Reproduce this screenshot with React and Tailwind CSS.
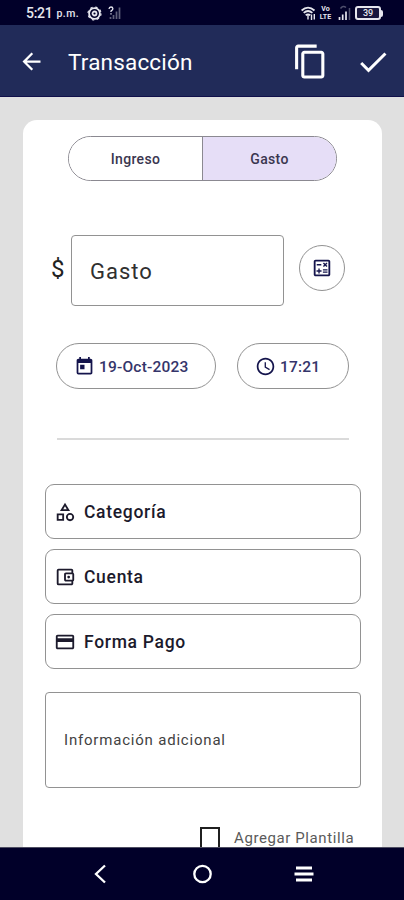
import React, { useState } from "react";
import {
  MdArrowBack,
  MdCheck,
  MdContentCopy,
  MdToday,
  MdSchedule,
  MdOutlineCalculate,
  MdOutlineCategory,
  MdOutlineAccountBalanceWallet,
  MdOutlineCreditCard,
} from "react-icons/md";

const options = [
  { label: "Categoría", icon: MdOutlineCategory },
  { label: "Cuenta", icon: MdOutlineAccountBalanceWallet },
  { label: "Forma Pago", icon: MdOutlineCreditCard },
];

function StatusBar() {
  return (
    <div className="flex h-[25px] shrink-0 items-center bg-[#010029] pl-[26px] pr-[21px] pt-px text-[#e6e6ee]">
      <span className="text-[14px] font-medium leading-none tracking-[-0.3px]">5:21</span>
      <span className="ml-[4px] pt-[3px] text-[10.5px] font-medium leading-none tracking-[0.5px]">p.m.</span>
      <svg className="ml-[8px] h-[15px] w-[15px]" viewBox="0 0 15 15" fill="none" stroke="currentColor">
        <circle cx="7.5" cy="7.5" r="5.4" strokeWidth="1.8" />
        <circle cx="7.5" cy="7.5" r="6.5" strokeWidth="1.2" strokeDasharray="2.4 2.7" />
        <circle cx="7.5" cy="7.5" r="2" strokeWidth="1.8" />
      </svg>
      <svg className="ml-[6px] h-[14px] w-[13px]" viewBox="0 0 13 14" fill="none" stroke="currentColor">
        <path d="M1 3q.2-2 2-2t1.9 1.7Q4.9 3.8 3 5v1M3 7.3v1.2" strokeWidth="1.3" />
        <path d="M2.5 13v-2M5.5 13V9M8.5 13V5.5M11.5 13V1.5" strokeWidth="1.7" opacity=".42" />
      </svg>
      <div className="flex-1" />
      <svg className="h-[15px] w-[15px]" viewBox="0 0 15 15" fill="none" stroke="currentColor">
        <path d="M.6 4.5Q7 -1.2 13.5 4.5M2.7 6.9Q7 3.2 11.4 6.9M4.7 9.2Q7 7.5 9.3 9.2" strokeWidth="1.8" />
        <path d="M7 9v4.5M10.5 14V8.5M13.3 8v5.5" strokeWidth="1.4" />
      </svg>
      <div className="ml-[2px] mr-px flex w-[15px] flex-col items-center text-[7px] font-bold">
        <span className="h-[8px] leading-[8px]">Vo</span>
        <span className="h-[8px] leading-[8px]">LTE</span>
      </div>
      <svg className="ml-[4px] h-[16px] w-[13px]" viewBox="0 0 13 16" fill="none" stroke="currentColor">
        <path d="M1.5 15v-3M4.7 15V9.5M8 15V6.5" strokeWidth="1.7" />
        <path d="M11.5 15V3M2.5 3.5Q5 0 8 2.5" strokeWidth="1.5" opacity=".35" />
      </svg>
      <div className="ml-[4px] flex h-[14px] w-[26px] items-center justify-center rounded-[3px] border-2 border-current bg-[#18163e] text-[9px] font-medium leading-none">
        39
      </div>
      <div className="h-[7px] w-[2px] rounded-r-sm bg-current" />
    </div>
  );
}

function AppBar() {
  return (
    <header className="flex h-[72px] shrink-0 items-center border-b border-[#10104a] bg-[#212b59] pl-[18px] pr-[13px] pt-[2px] text-white">
      <MdArrowBack className="h-[27px] w-[27px]" />
      <h1 className="ml-[23px] flex-1 pt-[2px] text-[22.5px] leading-none tracking-[0.18px]">Transacción</h1>
      <MdContentCopy className="mr-[26px] h-[37px] w-[37px]" />
      <MdCheck className="h-[36px] w-[36px]" />
    </header>
  );
}

function NavBar() {
  return (
    <nav className="flex h-[53px] shrink-0 items-center border-t border-[#4e4e62] bg-[#010029] pl-[92px] text-white">
      <svg className="h-[20px] w-[16px]" viewBox="0 0 16 20" fill="none" stroke="currentColor" strokeWidth="2.3">
        <path d="M13 1.5 4 10l9 8.5" />
      </svg>
      <svg className="ml-[84px] h-[20px] w-[20px]" viewBox="0 0 20 20" fill="none" stroke="currentColor" strokeWidth="2.3">
        <circle cx="10.5" cy="10" r="8.2" />
      </svg>
      <svg className="ml-[82px] h-[20px] w-[20px]" viewBox="0 0 20 20" stroke="currentColor" strokeWidth="2.8">
        <path d="M2 4h16M.5 10h19M2 16h16" />
      </svg>
    </nav>
  );
}

function App() {
  const [type, setType] = useState("Gasto");
  const [template, setTemplate] = useState(false);

  return (
    <div className="flex h-[900px] w-[404px] flex-col overflow-hidden bg-[#e0e0e0] font-['Roboto',sans-serif]">
      <StatusBar />
      <AppBar />

      <main className="min-h-0 flex-1 overflow-hidden pl-[23px] pr-[22px] pt-[23px]">
        <div className="flex h-[800px] flex-col rounded-[14px] bg-white px-[22px] pt-[16px]">
          <div className="ml-[23px] flex h-[45px] w-[269px] overflow-hidden rounded-full border border-[#8b8991] text-[14px] font-medium tracking-[0.35px] text-[#3a3650]">
            {["Ingreso", "Gasto"].map((name) => (
              <button
                key={name}
                onClick={() => setType(name)}
                className={`flex-1 border-[#8b8991] pt-[2px] first:border-r ${type === name ? "bg-[#e6def7]" : "bg-white"}`}
              >
                {name}
              </button>
            ))}
          </div>

          <div className="mt-[54px] flex items-center">
            <span className="ml-[6px] w-[20px] pb-[4px] text-[24px] leading-none text-[#222]">$</span>
            <div className="flex h-[71px] w-[213px] items-center rounded-[4px] border border-[#929292] pl-[18px] pt-px text-[22px] tracking-[1px] text-[#303030]">
              Gasto
            </div>
            <button className="mb-[6px] ml-[15px] flex h-[46px] w-[46px] items-center justify-center rounded-full border border-[#929292] text-[#14144c]">
              <MdOutlineCalculate className="h-[22px] w-[22px]" />
            </button>
          </div>

          <div className="mt-[37px] flex text-[15.5px] font-medium text-[#35356a]">
            <button className="ml-[11px] flex h-[46px] w-[160px] items-center rounded-full border border-[#929292] pl-[17px]">
              <MdToday className="mr-[4px] h-[21px] w-[21px] text-[#14144c]" />
              <span className="pt-[3px] tracking-[0.2px]">19-Oct-2023</span>
            </button>
            <button className="ml-[21px] flex h-[46px] w-[112px] items-center rounded-full border border-[#929292] pl-[17px]">
              <MdSchedule className="mr-[4px] h-[21px] w-[21px] text-[#14144c]" />
              <span className="pt-[3px] tracking-[0.2px]">17:21</span>
            </button>
          </div>

          <hr className="ml-[12px] mr-[11px] mt-[49px] border-0 border-t-2 border-[#dadada]" />

          <div className="mt-[44px] flex flex-col gap-[10px]">
            {options.map(({ label, icon: Icon }) => (
              <button
                key={label}
                className="flex h-[55px] w-[316px] items-center rounded-[9px] border border-[#929292] pl-[8px] text-[17.5px] font-medium text-[#1c1a2c]"
              >
                <Icon className="mr-[8px] h-[22px] w-[22px]" />
                <span className="pt-[2px] tracking-[0.7px]">{label}</span>
              </button>
            ))}
          </div>

          <div className="mt-[23px] flex h-[96px] w-[316px] shrink-0 items-center rounded-[4px] border border-[#929292] pl-[18px] pt-px text-[15px] tracking-[0.8px] text-[#424242]">
            Información adicional
          </div>

          <label className="ml-[155px] mt-[39px] flex h-[22px] items-center">
            <input
              type="checkbox"
              checked={template}
              onChange={(e) => setTemplate(e.target.checked)}
              className="h-[22px] w-[20px] shrink-0 appearance-none border-2 border-[#202020] checked:bg-[#202020]"
            />
            <span className="ml-[14px] whitespace-nowrap pt-px text-[15px] leading-none tracking-[0.6px] text-[#5a5a5a]">
              Agregar Plantilla
            </span>
          </label>
        </div>
      </main>

      <NavBar />
    </div>
  );
}

export default App;
